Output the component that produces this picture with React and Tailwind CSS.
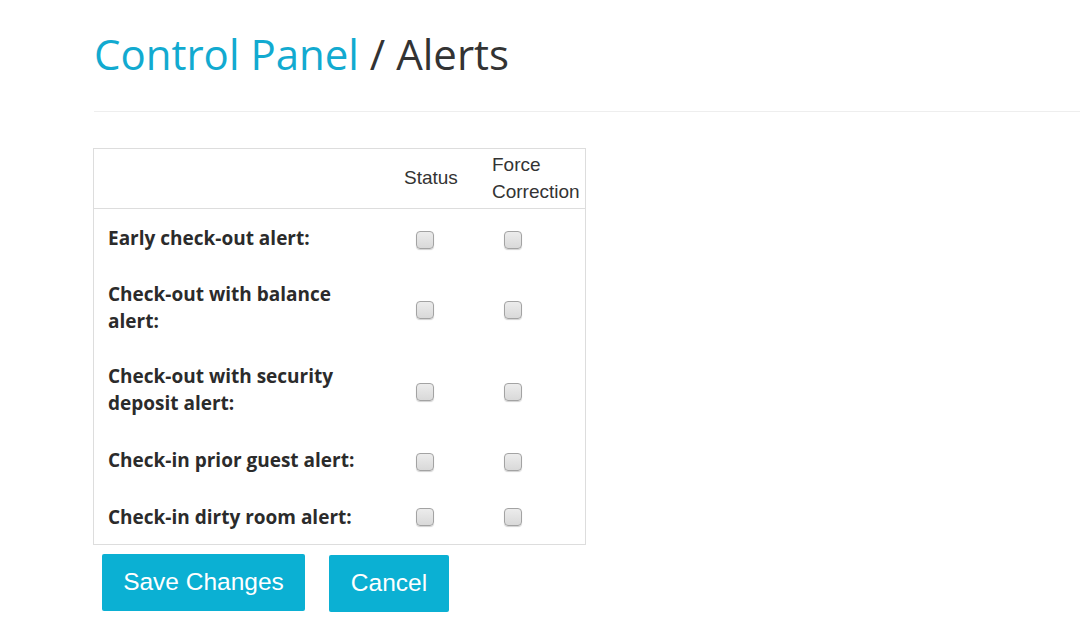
import React from "react";

function Box() {
  return (
    <span className="block w-[18px] h-[18px] rounded-[4px] border border-[#a3a3a3] bg-gradient-to-b from-[#ececec] to-[#d9d9d9] shadow-[0_1px_1px_rgba(0,0,0,0.18)]" />
  );
}

const rows = [
  { label: "Early check-out alert:", row: "h-[62px]", lab: "pb-1" },
  { label: "Check-out with balance alert:", row: "h-[78px]", lab: "pb-1" },
  { label: "Check-out with security deposit alert:", row: "h-[86px]", lab: "pb-1" },
  { label: "Check-in prior guest alert:", row: "h-[54px]", lab: "pb-[3px]" },
  { label: "Check-in dirty room alert:", row: "h-[55px]", lab: "pt-[2px]" },
];

export default function App() {
  return (
    <div className="w-[1080px] h-[642px] overflow-hidden bg-white pl-[94px]">
      <h1 className="pt-[31px] text-[42px] leading-[1.1] font-['Open_Sans',sans-serif] font-normal text-[#333333] whitespace-nowrap">
        <span className="text-[#12aad0]">Control Panel</span> / Alerts
      </h1>
      <div className="mt-[34px] h-px bg-[#eeeeee] w-[1000px]" />
      <div className="mt-[36px] -ml-px w-[493px] border border-[#dddddd] font-['Liberation_Sans',Arial,sans-serif] text-[19px] leading-[27px] text-[#333333]">
        <div className="grid grid-cols-[302px_88px_1fr] items-center h-[60px] border-b border-[#dddddd]">
          <div />
          <div className="pl-[8px] pb-[2px]">Status</div>
          <div className="pl-[8px] pb-[2px] whitespace-nowrap">Force<br />Correction</div>
        </div>
        {rows.map((r) => (
          <div key={r.label} className={"grid grid-cols-[302px_88px_1fr] items-center " + r.row}>
            <div className={"pl-[14px] pr-[34px] font-['Open_Sans',sans-serif] font-bold text-[19px] text-[#2b2b2b] " + r.lab}>
              {r.label}
            </div>
            <div className="pl-[20px]"><Box /></div>
            <div className="pl-[20px]"><Box /></div>
          </div>
        ))}
      </div>
      <div className="mt-[9px] flex items-start gap-[24px] pl-[8px] font-['Liberation_Sans',Arial,sans-serif] text-[24.5px] text-white">
        <button className="h-[57px] w-[203px] rounded-[2px] bg-[#0bb0d3]">Save Changes</button>
        <button className="mt-px h-[57px] w-[120px] rounded-[2px] bg-[#0bb0d3]">Cancel</button>
      </div>
    </div>
  );
}
